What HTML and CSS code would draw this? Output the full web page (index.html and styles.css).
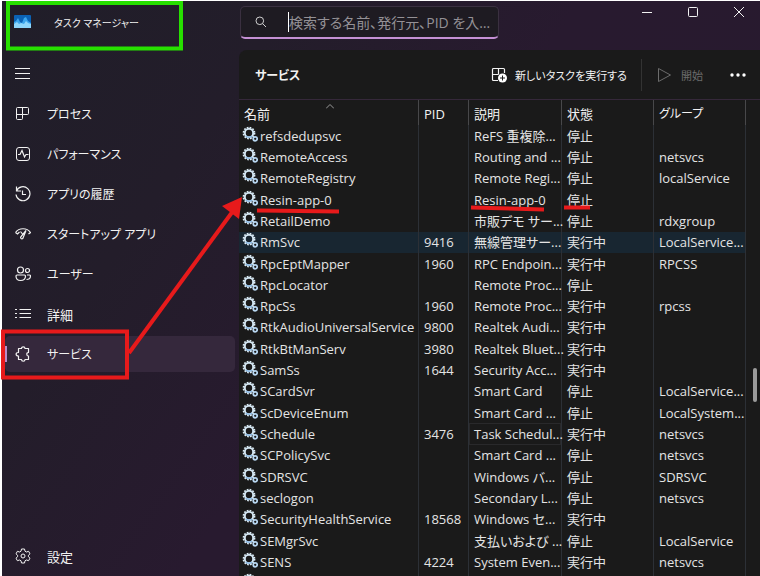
FILE: index.html
```html
<!DOCTYPE html>
<html lang="ja">
<head>
<meta charset="utf-8">
<title>タスク マネージャー</title>
<link rel="stylesheet" href="styles.css">
</head>
<body>
<svg class="defs" aria-hidden="true">
  <symbol id="gears" viewBox="0 0 16 16">
    <circle cx="7" cy="7" r="5.6" fill="none" stroke="#dcecf5" stroke-width="1.600" stroke-dasharray="1.700 1.230"/>
    <circle cx="7" cy="7" r="4.200" fill="none" stroke="#d3e6f2" stroke-width="2"/>
    <path d="M4 10a4.300 4.300 0 0 0 6 0" fill="none" stroke="#86b8e6" stroke-width="1.600"/>
    <circle cx="13.200" cy="12.800" r="2" fill="#1a1a1a" stroke="#b9d8f2" stroke-width="1.700"/>
  </symbol>
</svg>
<div class="app">
  <header class="titlebar">
    <div class="brand">
      <svg class="logo" viewBox="0 0 17 13" aria-hidden="true"><rect width="17" height="13" rx="1" fill="#0b62b4"/><path d="M0 7l2-1 2-3 2 4 2 1 2-5 2-1 2 4 3 2v5H0z" fill="#3ba5ec"/><path d="M0 9l3-2 2 2 2-1 3 1 2-3 2 2 3 1v4H0z" fill="#8ed6fb"/></svg>
      <span>タスク マネージャー</span>
    </div>
    <label class="search">
      <svg viewBox="0 0 12 12" aria-hidden="true"><circle cx="4.800" cy="4.800" r="3.800"/><path d="M7.600 7.600L11 11"/></svg>
      <input type="text" placeholder="検索する名前、発行元、PID を入力して検索" aria-label="検索">
    </label>
    <div class="window-buttons">
      <button aria-label="最小化"><svg viewBox="0 0 12 12"><path d="M1 6.500h10"/></svg></button>
      <button aria-label="最大化"><svg viewBox="0 0 12 12"><rect x="1.500" y="1.500" width="9" height="9" rx="1"/></svg></button>
      <button aria-label="閉じる"><svg viewBox="0 0 12 12"><path d="M1 1l10 10M11 1L1 11"/></svg></button>
    </div>
  </header>
  <nav class="sidebar">
    <button class="item menu" aria-label="メニュー"><svg viewBox="0 0 16 16"><path d="M0 3.500h15M0 8.500h15M0 13.500h15"/></svg></button>
    <a class="item" href="#"><svg viewBox="0 0 16 16"><path d="M2.500 1.500h10a1 1 0 0 1 1 1v5a1 1 0 0 1-1 1H7.500v4a1 1 0 0 1-1 1h-4a1 1 0 0 1-1-1v-10a1 1 0 0 1 1-1zM7.500 1.500v7M1.500 8.500h6"/></svg><span>プロセス</span></a>
    <a class="item" href="#"><svg viewBox="0 0 16 16"><rect x="1.500" y="1.500" width="13" height="13" rx="2.500"/><path d="M3 8.500h2l2-4 2.500 6.500 1.500-2.500h2.500" stroke-width="1.200"/></svg><span>パフォーマンス</span></a>
    <a class="item" href="#"><svg viewBox="0 0 16 16"><path d="M1.500 .5v4.500H6M1.500 5A7 7 0 1 1 1 8.500M7.500 4.500v4h3.500" stroke-width="1.200"/></svg><span>アプリの履歴</span></a>
    <a class="item" href="#"><svg viewBox="0 0 16 16"><path d="M.5 6.500C4 1.500 12 1.500 15.500 6.500l-2 1.500M.5 6.500l2 1.500 2-2M11 4.500l-3 7.500c-.5 1.500-3 .7-2.300-1zM7.500 8L5.500 5.500" stroke-width="1.200"/></svg><span>スタートアップ アプリ</span></a>
    <a class="item" href="#"><svg viewBox="0 0 16 16"><path d="M8.500 4a3 3 0 1 1-6 0 3 3 0 1 1 6 0zM14.500 4.500a2 2 0 1 1-4 0 2 2 0 1 1 4 0zM2 9h7.500a1 1 0 0 1 1 1c0 3-2 4.500-5 4.500S1 13 1 10a1 1 0 0 1 1-1zM12 9h2.500a1 1 0 0 1 1 1c0 2.500-1.500 3.500-4 3.500" stroke-width="1.200"/></svg><span>ユーザー</span></a>
    <a class="item kanji" href="#"><svg viewBox="0 0 16 16"><path d="M4.500 3.500H16M4.500 7.500H16M4.500 11.500H16M0 3.500h2M0 7.500h2M0 11.500h2"/></svg><span>詳細</span></a>
    <a class="item selected" href="#" aria-current="page"><svg viewBox="0 0 16 16"><path d="M3.500 2.500H6.500C6.500 .2 10 .2 10 2.500h3.500v4c-2.300-.1-2.300 3.500 0 3.500v3.500H10c0 2.300-3.500 2.300-3.500 0h-3V10C.3 10 .3 6.500 3.500 6.500z" stroke-width="1.200" stroke-linejoin="round"/></svg><span>サービス</span></a>
    <a class="item kanji settings" href="#"><svg viewBox="0 0 16 16"><circle cx="8" cy="8" r="2"/><path d="M6.500 1h3l.5 2.200 1.400.8 2.200-.7 1.400 2.500L13.400 7.300v1.400l1.600 1.500-1.400 2.500-2.200-.7-1.400.8-.5 2.200h-3L6 12.800 4.600 12l-2.200.7L1 10.200l1.600-1.500V7.300L1 5.800l1.400-2.500 2.200.7L6 3.200z"/></svg><span>設定</span></a>
  </nav>
  <main class="panel">
    <div class="toolbar">
      <h1>サービス</h1>
      <button class="run"><svg viewBox="0 0 16 16" aria-hidden="true"><path d="M7 13.500H2.500a1 1 0 0 1-1-1v-10a1 1 0 0 1 1-1h10a1 1 0 0 1 1 1V6M7.500 1.500v6M1.500 7.500h6" stroke-width="1.200"/><circle cx="11.500" cy="11" r="4.500" fill="#fff" stroke="none"/><path d="M11.500 8.500v5M9 11h5" stroke="#1a1a1a"/></svg><span>新しいタスクを実行する</span></button>
      <button class="start" disabled><svg viewBox="0 0 16 16" aria-hidden="true"><path d="M1.500 1.500v13l12-6.500z"/></svg><span>開始</span></button>
      <button class="more" aria-label="その他"><svg viewBox="0 0 16 16"><circle cx="2" cy="8" r="1.700"/><circle cx="8" cy="8" r="1.700"/><circle cx="14" cy="8" r="1.700"/></svg></button>
    </div>
    <div class="list">
      <table>
        <colgroup><col class="c-name"><col class="c-pid"><col class="c-desc"><col class="c-state"><col class="c-group"><col></colgroup>
        <thead><tr><th>名前<svg class="sort" viewBox="0 0 8 5" aria-hidden="true"><path d="M0 4.500L4 .5l4 4"/></svg></th><th>PID</th><th>説明</th><th>状態</th><th class="kana">グループ</th><th class="rest"></th></tr></thead>
        <tbody>
          <tr><td><svg><use href="#gears"/></svg>refsdedupsvc</td><td></td><td>ReFS 重複除...</td><td>停止</td><td></td></tr>
          <tr><td><svg><use href="#gears"/></svg>RemoteAccess</td><td></td><td>Routing and ...</td><td>停止</td><td>netsvcs</td></tr>
          <tr><td><svg><use href="#gears"/></svg>RemoteRegistry</td><td></td><td>Remote Regi...</td><td>停止</td><td>localService</td></tr>
          <tr><td><svg><use href="#gears"/></svg>Resin-app-0</td><td></td><td>Resin-app-0</td><td>停止</td><td></td></tr>
          <tr><td><svg><use href="#gears"/></svg>RetailDemo</td><td></td><td>市販デモ サー...</td><td>停止</td><td>rdxgroup</td></tr>
          <tr class="hover"><td><svg><use href="#gears"/></svg>RmSvc</td><td>9416</td><td>無線管理サー...</td><td>実行中</td><td>LocalService...</td></tr>
          <tr><td><svg><use href="#gears"/></svg>RpcEptMapper</td><td>1960</td><td>RPC Endpoin...</td><td>実行中</td><td>RPCSS</td></tr>
          <tr><td><svg><use href="#gears"/></svg>RpcLocator</td><td></td><td>Remote Proc...</td><td>停止</td><td></td></tr>
          <tr><td><svg><use href="#gears"/></svg>RpcSs</td><td>1960</td><td>Remote Proc...</td><td>実行中</td><td>rpcss</td></tr>
          <tr><td><svg><use href="#gears"/></svg>RtkAudioUniversalService</td><td>9800</td><td>Realtek Audi...</td><td>実行中</td><td></td></tr>
          <tr><td><svg><use href="#gears"/></svg>RtkBtManServ</td><td>3980</td><td>Realtek Bluet...</td><td>実行中</td><td></td></tr>
          <tr><td><svg><use href="#gears"/></svg>SamSs</td><td>1644</td><td>Security Acc...</td><td>実行中</td><td></td></tr>
          <tr><td><svg><use href="#gears"/></svg>SCardSvr</td><td></td><td>Smart Card</td><td>停止</td><td>LocalService...</td></tr>
          <tr><td><svg><use href="#gears"/></svg>ScDeviceEnum</td><td></td><td>Smart Card ...</td><td>停止</td><td>LocalSystem...</td></tr>
          <tr><td><svg><use href="#gears"/></svg>Schedule</td><td>3476</td><td class="focus">Task Schedul...</td><td>実行中</td><td>netsvcs</td></tr>
          <tr><td><svg><use href="#gears"/></svg>SCPolicySvc</td><td></td><td>Smart Card ...</td><td>停止</td><td>netsvcs</td></tr>
          <tr><td><svg><use href="#gears"/></svg>SDRSVC</td><td></td><td>Windows バ...</td><td>停止</td><td>SDRSVC</td></tr>
          <tr><td><svg><use href="#gears"/></svg>seclogon</td><td></td><td>Secondary L...</td><td>停止</td><td>netsvcs</td></tr>
          <tr><td><svg><use href="#gears"/></svg>SecurityHealthService</td><td>18568</td><td>Windows セ...</td><td>実行中</td><td></td></tr>
          <tr><td><svg><use href="#gears"/></svg>SEMgrSvc</td><td></td><td>支払いおよび ...</td><td>停止</td><td>LocalService</td></tr>
          <tr><td><svg><use href="#gears"/></svg>SENS</td><td>4224</td><td>System Even...</td><td>実行中</td><td>netsvcs</td></tr>
          <tr><td><svg><use href="#gears"/></svg></td><td></td><td></td><td></td><td></td></tr>
        </tbody>
      </table>
      <div class="thumb"></div>
    </div>
  </main>
</div>
<svg class="marks" viewBox="0 0 760 576" aria-hidden="true">
  <rect x="8" y="3" width="173" height="45.500" fill="none" stroke="#27e000" stroke-width="4"/>
  <g stroke="#e71a1b" fill="none" stroke-width="4">
    <rect x="3" y="331.500" width="124" height="46"/>
    <path d="M129 353L233 211"/>
    <path d="M257 210.500L339 211.500M471 207.500L544 209.500M564 207.500H590"/>
  </g>
  <path d="M242 197l-20 9 17 13z" fill="#e71a1b"/>
</svg>
</body>
</html>
```
FILE: styles.css
```css
* { box-sizing: border-box; }
html, body { height: 100%; }
body {
  margin: 0;
  padding: 1px 0 0 2px;
  background: #fff;
  overflow: hidden;
  color: #f2f2f2;
  font-family: "Open Sans", "Noto Sans CJK JP", sans-serif;
  font-size: 13px;
  font-feature-settings: "palt";
}
button, input { font: inherit; font-feature-settings: inherit; color: inherit; background: none; border: 0; padding: 0; }
svg { fill: none; stroke: currentColor; flex: none; }
.defs { position: absolute; width: 0; height: 0; }
.app {
  display: grid;
  grid-template: 49px minmax(0, 1fr) / 237px minmax(0, 1fr);
  height: 100%;
  background: linear-gradient(125deg, #201e29 0%, #231d2a 25%, #281a2f 50%, #281a2e 100%);
}
.titlebar { grid-column: 1 / -1; display: grid; grid-template-columns: 238px 259px 1fr; }
.brand { display: flex; gap: 23px; padding: 13px 0 0 12px; font-size: 10px; line-height: 18px; }
.logo { width: 17px; height: 13px; margin-top: 1px; stroke: none; }
.search {
  display: flex;
  align-items: center;
  gap: 21px;
  height: 33px;
  margin-top: 5px;
  padding: 0 4px 0 14px;
  background: #1e1b22;
  border: 1px solid #3a3040;
  border-bottom: 2px solid #c490d4;
  border-radius: 5px;
}
.search svg { width: 12px; height: 12px; color: #d0d0d0; }
.search input {
  flex: 1;
  min-width: 0;
  height: 20px;
  border-left: 1px solid #fff;
  outline: 0;
  font-size: 14px;
  text-overflow: ellipsis;
}
.search input::placeholder { color: #949196; }
.window-buttons { display: flex; justify-content: flex-end; gap: 34px; padding: 5px 15px 0 0; height: 18px; }
.window-buttons button, .window-buttons svg { display: block; width: 12px; height: 12px; }

.sidebar { display: flex; flex-direction: column; gap: 4px; padding: 5px 4px 2px 3px; }
.item {
  display: flex;
  align-items: center;
  gap: 16px;
  height: 36px;
  padding-left: 10px;
  border-radius: 5px;
  color: #f2f2f2;
  font-size: 12px;
  text-decoration: none;
}
.item svg { width: 16px; height: 16px; }
.kanji { font-size: 13px; }
.menu { margin-bottom: 1px; }
.selected { background: linear-gradient(#b98cc8, #b98cc8) 0 50% / 2px 16px no-repeat #35283c; }
.settings { margin-top: auto; }

.panel { display: flex; flex-direction: column; min-width: 0; background: #1a1a1a; border-top-left-radius: 8px; overflow: hidden; }
.toolbar { display: flex; align-items: center; height: 50px; border-bottom: 1px solid #35283a; padding: 0 14px 0 16px; font-size: 11px; }
.toolbar h1 { margin: 0; font-size: 12px; font-weight: 700; }
.toolbar button { display: flex; align-items: center; height: 32px; gap: 8px; }
.toolbar svg { width: 16px; height: 16px; }
.run { margin-left: auto; padding-right: 14px; }
.toolbar .start { padding: 0 27px 0 15px; border-left: 1px solid #333; color: #6c6c6c; }
.more svg { fill: #fff; stroke: none; }

.list { position: relative; flex: 1; min-height: 0; overflow: hidden; }
table { width: 100%; height: calc(100% + 18px); table-layout: fixed; border-collapse: separate; border-spacing: 0; line-height: 20px; }
.c-name { width: 180px; }
.c-pid { width: 50px; }
.c-desc { width: 93px; }
.c-state, .c-group { width: 92px; }
th { height: 25px; padding: 2px 0 0 5px; text-align: left; font-weight: 400; border-right: 1px solid #48484a; }
th.kana { font-size: 12px; }
th.rest { border: 0; }
td { padding: 0 0 0 5px; height: 21px; white-space: nowrap; border-right: 1px solid #2c3036; color: #e4e4e4; }
td:first-child { padding-left: 3px; }
td svg { width: 16px; height: 16px; margin-right: 2px; vertical-align: top; stroke: none; }
.hover td { background: #182631; }
.focus { box-shadow: inset 0 0 0 1px #29292b; }
.sort { float: right; width: 8px; height: 5px; margin-right: 84px; color: #999; }
.thumb { position: absolute; top: 268px; right: 3px; width: 4px; height: 34px; border-radius: 2px; background: #9b9b9b; }
.marks { position: absolute; top: 0; left: 0; width: 760px; height: 576px; stroke: none; pointer-events: none; }
```
